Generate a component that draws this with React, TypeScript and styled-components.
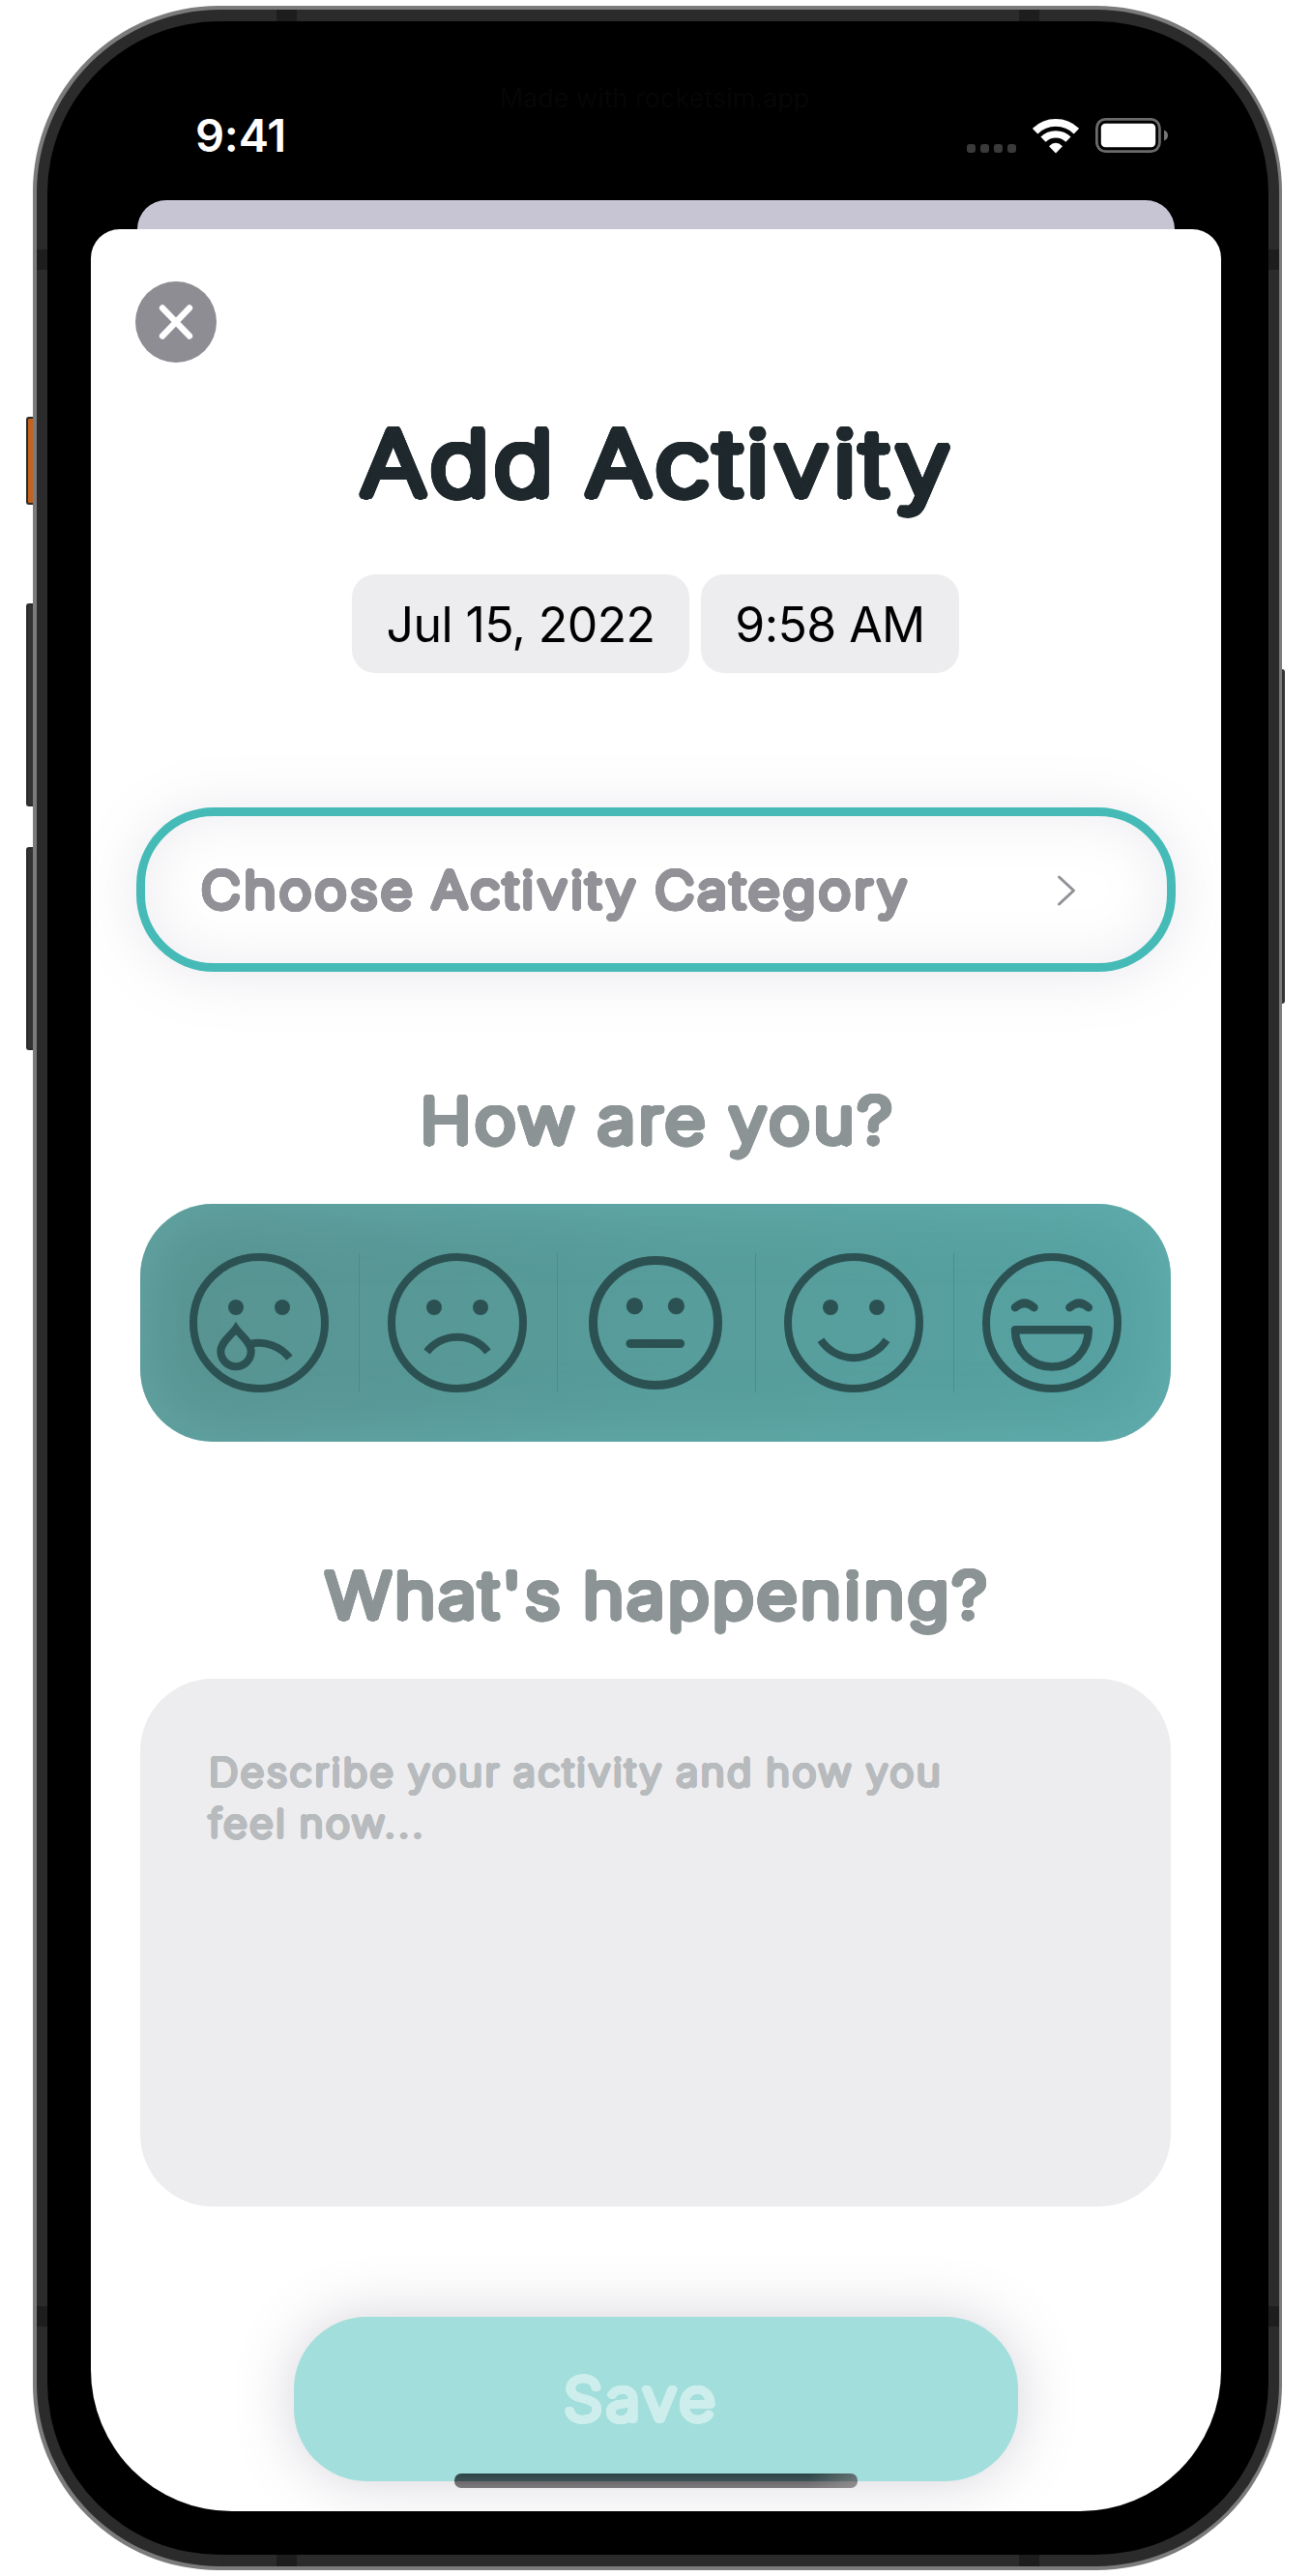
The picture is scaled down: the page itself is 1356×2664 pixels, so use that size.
import React from "react";
import styled, { createGlobalStyle } from "styled-components";

const GlobalStyle = createGlobalStyle`
  * { box-sizing: border-box; }
  html, body { margin: 0; padding: 0; background: #fff; }
  body { font-family: Inter, "Liberation Sans", sans-serif; }
`;

/* Grows a light typeface evenly in all directions, which gives round stroke ends. */
const roundStroke = (radius: number) => {
  const layers: string[] = [];
  [1, 0.66, 0.33].forEach((k) => {
    const count = Math.round(24 * k) + 4;
    for (let i = 0; i < count; i += 1) {
      const a = (i / count) * Math.PI * 2;
      layers.push(
        `${(Math.cos(a) * radius * k).toFixed(2)}px ${(Math.sin(a) * radius * k).toFixed(2)}px 0 currentColor`
      );
    }
  });
  return layers.join(",");
};

const RoundText = styled.span<{
  $size: number;
  $grow: number;
  $track: number;
  $line: number;
  $color: string;
  $stretch: number;
  $from?: string;
}>`
  display: block;
  font-weight: 200;
  font-size: ${(p) => p.$size}px;
  line-height: ${(p) => p.$line}px;
  letter-spacing: ${(p) => p.$track}px;
  word-spacing: -0.05em;
  margin-right: ${(p) => -p.$track}px;
  color: ${(p) => p.$color};
  white-space: pre;
  text-shadow: ${(p) => roundStroke(p.$grow)};
  transform: scaleX(${(p) => p.$stretch});
  transform-origin: ${(p) => p.$from ?? "center"};
`;

const Page = styled.div`
  width: 1356px;
  height: 2664px;
  padding: 6px 0 0 34px;
  overflow: hidden;
  background: #fff;
`;

const Phone = styled.div`
  position: relative;
  width: 1292px;
  height: 2651.5px;
  padding: 3.5px;
  border-radius: 192px;
  background: #7b7b7b;
`;

const Frame = styled.div`
  position: relative;
  height: 100%;
  padding: 12px 11px;
  border-radius: 189px;
  background: #2b2b2b;
`;

const Bezel = styled.div`
  position: relative;
  display: flex;
  flex-direction: column;
  height: 100%;
  padding: 0 48.5px 44.7px 45px;
  border-radius: 178px;
  background: #000;
`;

const SideKey = styled.div<{ $top: number; $height: number; $right?: boolean; $accent?: boolean }>`
  position: absolute;
  top: ${(p) => p.$top}px;
  ${(p) => (p.$right ? "right: -3px; width: 3px;" : "left: -7px; width: 7px;")}
  height: ${(p) => p.$height}px;
  border: ${(p) => (p.$right ? "0" : "2px")} solid #2b2b2b;
  border-right-width: 0;
  border-radius: ${(p) => (p.$right ? "0 3px 3px 0" : "3px 0 0 3px")};
  background: ${(p) => (p.$accent ? "#c4621f" : "#333")};
`;

const Band = styled.div<{ $x: "left" | "right"; $y: "top" | "bottom"; $side?: boolean }>`
  position: absolute;
  background: #1d1d1d;
  ${(p) =>
    p.$side
      ? `${p.$x}: 0; ${p.$y}: 248px; width: 11px; height: 21px;`
      : `${p.$x}: 248px; ${p.$y}: 0; width: 21px; height: 12px;`}
`;

const StatusBar = styled.div`
  display: flex;
  justify-content: space-between;
  height: 185.5px;
  padding: 93.5px 55.5px 0 108.5px;
`;

const Clock = styled.div`
  height: 50px;
  color: #fff;
  font-size: 47px;
  font-weight: 580;
  line-height: 50px;
  letter-spacing: -0.2px;
`;

const Watermark = styled.div`
  position: absolute;
  top: 60px;
  left: 0;
  width: 100%;
  padding-right: 6px;
  text-align: center;
  color: #060606;
  font-size: 27px;
  line-height: 40px;
`;

const Indicators = styled.div`
  display: flex;
  align-items: center;
  height: 50px;
`;

const Dots = styled.div`
  display: flex;
  gap: 5px;
  margin: 26px 17px 0 0;
  & > i {
    width: 9px;
    height: 9px;
    border-radius: 3px;
    background: #3a3a3a;
  }
`;

const StatusIcons = styled.div`
  display: flex;
  align-items: center;
  gap: 17px;
`;

const BackCard = styled.div`
  height: 30px;
  margin: 0 48px;
  border-radius: 30px 30px 0 0;
  background: #c7c5d3;
`;

const Sheet = styled.main`
  position: relative;
  display: flex;
  flex-direction: column;
  align-items: center;
  flex: 1;
  border-radius: 30px 30px 146px 146px;
  background: #fff;
  overflow: hidden;
`;

const CloseButton = styled.button`
  display: flex;
  align-self: flex-start;
  align-items: center;
  justify-content: center;
  width: 84px;
  height: 84px;
  margin: 54px 0 0 46.5px;
  padding: 0;
  border: 0;
  border-radius: 50%;
  background: #8e8d94;
`;

const Title = styled.h1`
  margin: 54px 0 0;
`;

const DateRow = styled.div`
  display: flex;
  gap: 12px;
  margin-top: 64.5px;
`;

const DatePill = styled.div<{ $width: number; $track: number }>`
  width: ${(p) => p.$width}px;
  height: 102px;
  border-radius: 24px;
  background: #ededef;
  color: #000;
  font-size: 50px;
  line-height: 104px;
  text-align: center;
  letter-spacing: ${(p) => p.$track}px;
  white-space: nowrap;
`;

const CategoryField = styled.div`
  display: flex;
  flex-shrink: 0;
  align-items: center;
  justify-content: space-between;
  width: 1074.5px;
  height: 169.5px;
  margin-top: 139.5px;
  padding: 2px 94px 0 58px;
  border: 9px solid #45bab7;
  border-radius: 80px;
  box-shadow: 0 3px 60px rgba(120, 120, 150, 0.17), inset 0 0 60px rgba(120, 120, 150, 0.14);
`;

const Section = styled.h2<{ $top: number }>`
  margin: ${(p) => p.$top}px 0 0;
`;

const MoodPanel = styled.div`
  display: grid;
  grid-template-columns: repeat(5, 205px);
  flex-shrink: 0;
  align-items: center;
  justify-content: center;
  width: 1066px;
  height: 245.5px;
  margin-top: 46px;
  border-radius: 75px;
  background: linear-gradient(90deg, #589391, #579d9b 50%, #57a2a3);
  box-shadow: inset 0 0 70px rgba(112, 188, 187, 0.52);
`;

const MoodCell = styled.div`
  display: flex;
  justify-content: center;
  height: 144px;
  & + & {
    box-shadow: inset 1px 0 0 rgba(60, 110, 110, 0.35);
  }
`;

const NoteBox = styled.div`
  flex-shrink: 0;
  width: 1066px;
  height: 546px;
  margin-top: 45.7px;
  padding: 71px 0 0 70.5px;
  border-radius: 75px;
  background: #ededef;
`;

const SaveButton = styled.div`
  display: flex;
  flex-shrink: 0;
  align-items: center;
  justify-content: center;
  width: 749.5px;
  height: 170px;
  margin-top: 114px;
  padding-right: 33px;
  border-radius: 75px;
  background: #a2dedb;
  box-shadow: 0 0 60px rgba(100, 95, 120, 0.28);
`;

const HomeIndicator = styled.div`
  position: absolute;
  left: 376.5px;
  bottom: 24px;
  width: 417px;
  height: 15px;
  border-radius: 7px;
  background: linear-gradient(90deg, transparent 88%, rgba(190, 190, 190, 0.35)),
    linear-gradient(#2d4447, #3e5254 50%, #6c6a6c 55%, #7c7a7c);
`;

const ink = "#2c5152";

const Face = ({ small, children }: { small?: boolean; children: React.ReactNode }) => (
  <svg width="144" height="144" viewBox="0 0 144 144" fill="none" stroke={ink} strokeWidth={small ? 9 : 8}>
    <circle cx="72" cy="72" r={small ? 64.5 : 68} />
    {children}
  </svg>
);

const Eyes = ({ x1 = 48, x2 = 96, y = 56, r = 8 }) => (
  <g fill={ink} stroke="none">
    <circle cx={x1} cy={y} r={r} />
    <circle cx={x2} cy={y} r={r} />
  </g>
);

const moods: { name: string; face: React.ReactNode }[] = [
  {
    name: "crying",
    face: (
      <Face>
        <Eyes />
        <path d="M48 78 C43 85 32.3 92 32.3 101.5 A15.7 15.7 0 0 0 63.7 101.5 C63.7 92 53 85 48 78Z" />
        <path d="M63 93.8 A40 40 0 0 1 103.5 108.3" />
      </Face>
    ),
  },
  {
    name: "sad",
    face: (
      <Face>
        <Eyes />
        <path d="M40.5 102 A40 40 0 0 1 103.5 102" />
      </Face>
    ),
  },
  {
    name: "neutral",
    face: (
      <Face small>
        <Eyes x1={50.4} x2={93.4} y={54.7} r={8.6} />
        <path d="M46 93.5H97.6" strokeLinecap="round" />
      </Face>
    ),
  },
  {
    name: "happy",
    face: (
      <Face>
        <Eyes />
        <path d="M38 89.8 A40.7 40.7 0 0 0 106 89.8" />
      </Face>
    ),
  },
  {
    name: "laughing",
    face: (
      <Face>
        <path
          d="M34 56.2Q43.7 47.4 53.4 56.2M90.4 56.2Q100.1 47.4 109.8 56.2M34 79.3H109.8C109.8 102 93 117.5 72 117.5S34 102 34 79.3Z"
          strokeLinecap="round"
          strokeLinejoin="round"
          strokeWidth="8.5"
        />
      </Face>
    ),
  },
];

export default function App() {
  return (
    <Page>
      <GlobalStyle />
      <Phone>
        <SideKey $top={425} $height={91} $accent />
        <SideKey $top={618} $height={210} />
        <SideKey $top={870} $height={210} />
        <SideKey $top={686} $height={346} $right />
        <Frame>
          <Band $x="left" $y="top" />
          <Band $x="right" $y="top" />
          <Band $x="left" $y="bottom" />
          <Band $x="right" $y="bottom" />
          <Band $x="left" $y="top" $side />
          <Band $x="right" $y="top" $side />
          <Band $x="left" $y="bottom" $side />
          <Band $x="right" $y="bottom" $side />
          <Bezel>
            <Watermark>Made with rocketsim.app</Watermark>
            <StatusBar>
              <Clock>9:41</Clock>
              <Indicators>
                <Dots>
                  <i />
                  <i />
                  <i />
                  <i />
                </Dots>
                <StatusIcons>
                  <svg width="48" height="37" viewBox="0 0 48 37" fill="none" stroke="#fff">
                    <path d="M2.6 13.6A30.5 30.5 0 0 1 45.4 13.6" strokeWidth="7.8" />
                    <path d="M11 22.2A18.5 18.5 0 0 1 37 22.2" strokeWidth="7.4" />
                    <path d="M24 36.6L17 29.2Q24 22.4 31 29.2Z" fill="#fff" stroke="none" />
                  </svg>
                  <svg width="75" height="36" viewBox="0 0 75 36">
                    <rect x="1.4" y="1.4" width="65" height="33.2" rx="9" fill="none" stroke="#6b6b6b" strokeWidth="2.8" />
                    <rect x="5.8" y="5.8" width="56.4" height="24.4" rx="4.5" fill="#fff" />
                    <path d="M71 12.5Q75 14 75 18T71 23.5Z" fill="#777" />
                  </svg>
                </StatusIcons>
              </Indicators>
            </StatusBar>
            <BackCard />
            <Sheet>
              <CloseButton aria-label="Close">
                <svg width="36" height="38" viewBox="0 0 36 38" stroke="#fff" strokeWidth="6.4" strokeLinecap="round">
                  <path d="M4 4.5L32 33.5M32 4.5L4 33.5" />
                </svg>
              </CloseButton>
              <Title>
                <RoundText $size={92} $grow={4.5} $track={4.6} $stretch={1.12} $line={100} $color="#1f292d">
                  Add Activity
                </RoundText>
              </Title>
              <DateRow>
                <DatePill $width={348.5} $track={-0.6}>
                  Jul 15, 2022
                </DatePill>
                <DatePill $width={267.5} $track={-0.6}>
                  9:58 AM
                </DatePill>
              </DateRow>
              <CategoryField>
                <RoundText $size={51.5} $grow={2.8} $track={3.2} $stretch={1.095} $from="left" $line={79} $color="#929197">
                  Choose Activity Category
                </RoundText>
                <svg width="20" height="34" viewBox="0 0 20 34" fill="none" stroke="#929197" strokeWidth="3" strokeLinecap="round" strokeLinejoin="round">
                  <path d="M2.5 3L17.5 17L2.5 31" />
                </svg>
              </CategoryField>
              <Section $top={114.5}>
                <RoundText $size={65} $grow={3.5} $track={3.6} $stretch={1.1} $line={80} $color="#8c9495">
                  How are you?
                </RoundText>
              </Section>
              <MoodPanel>
                {moods.map((m) => (
                  <MoodCell key={m.name}>{m.face}</MoodCell>
                ))}
              </MoodPanel>
              <Section $top={119.5}>
                <RoundText $size={65} $grow={3.5} $track={3.4} $stretch={1.1} $line={80} $color="#8c9495">
                  What's happening?
                </RoundText>
              </Section>
              <NoteBox>
                <RoundText $size={39.5} $grow={1.9} $track={2.5} $stretch={1.067} $from="left" $line={53} $color="#b8bbbd">
                  {"Describe your activity and how you\nfeel now..."}
                </RoundText>
              </NoteBox>
              <SaveButton>
                <RoundText $size={60} $grow={3.1} $track={3.4} $stretch={1.08} $line={80} $color="#cdeeec">
                  Save
                </RoundText>
              </SaveButton>
              <HomeIndicator />
            </Sheet>
          </Bezel>
        </Frame>
      </Phone>
    </Page>
  );
}
